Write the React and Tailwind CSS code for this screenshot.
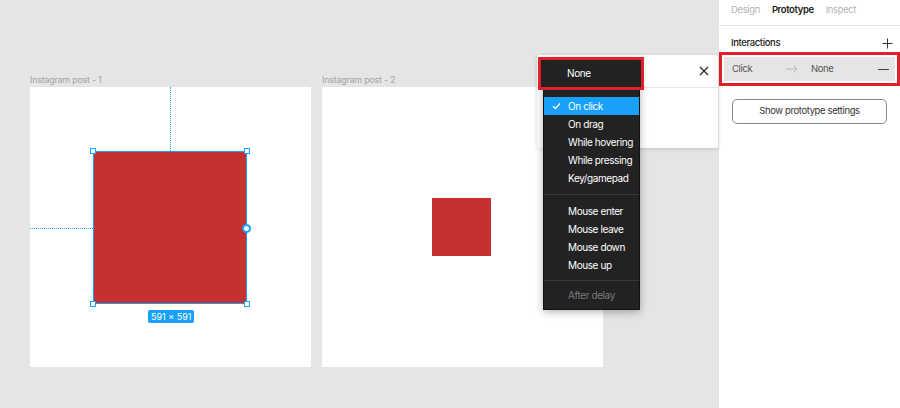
import React from "react";

const font = { fontFamily: "Inter, 'Noto Sans', sans-serif" };

function Handle({ className }) {
  return <div className={"absolute w-[6px] h-[6px] bg-white border border-[#18a0fb] " + className} />;
}

function Item({ children, checked, muted }) {
  return (
    <div
      className={
        "relative h-[18px] flex items-center pl-[24px] text-[10px] tracking-[-0.04em] whitespace-nowrap " +
        (checked ? "bg-[#18a0fb] text-white" : muted ? "text-[#7a7a7a]" : "text-white")
      }
    >
      {checked && (
        <svg className="absolute left-[8px] top-[5px]" width="9" height="8" viewBox="0 0 9 8">
          <path d="M1 4.2 L3.4 6.5 L8 1.5" stroke="white" strokeWidth="1.4" fill="none" />
        </svg>
      )}
      {children}
    </div>
  );
}

function Sep({ m }) {
  return <div className={"border-t border-[#3a3a3a] " + m} />;
}

export default function App() {
  return (
    <div className="flex w-[900px] h-[408px] overflow-hidden" style={font}>
      <div className="relative flex-1 bg-[#e5e5e5]">
        {/* Frame 1 */}
        <div className="absolute left-[30px] top-[74px] text-[9px] tracking-[-0.03em] text-[#a3a3a3] leading-[12px] whitespace-nowrap">Instagram post - 1</div>
        <div className="absolute left-[30px] top-[87px] w-[281px] h-[280px] bg-white">
          <div className="absolute left-[140px] top-0 h-[64px] border-l border-dotted border-[#18a0fb]" />
          <div className="absolute left-0 top-[141px] w-[63px] border-t border-dotted border-[#18a0fb]" />
          <div className="absolute left-[63px] top-[64px] w-[154px] h-[153px] bg-[#c53030] border border-[#18a0fb]">
            <Handle className="-left-[4px] -top-[4px]" />
            <Handle className="-right-[4px] -top-[4px]" />
            <Handle className="-left-[4px] -bottom-[4px]" />
            <Handle className="-right-[4px] -bottom-[4px]" />
            <div className="absolute -right-[5px] top-[72px] w-[9px] h-[9px] rounded-full bg-white border-2 border-[#18a0fb]" />
          </div>
          <div className="absolute left-[118px] top-[223px] h-[13px] px-[3px] rounded-[2px] bg-[#18a0fb] text-white text-[9px] leading-[13px] whitespace-nowrap">
            591 × 591
          </div>
        </div>

        {/* Frame 2 */}
        <div className="absolute left-[322px] top-[74px] text-[9px] tracking-[-0.03em] text-[#a3a3a3] leading-[12px] whitespace-nowrap">Instagram post - 2</div>
        <div className="absolute left-[322px] top-[87px] w-[281px] h-[280px] bg-white">
          <div className="absolute left-[110px] top-[111px] w-[59px] h-[58px] bg-[#c53030]" />
        </div>

        {/* Popover */}
        <div className="absolute left-[537px] top-[55px] w-[181px] h-[93px] bg-white rounded-[2px] shadow-[0_1px_4px_rgba(0,0,0,0.15)]">
          <div className="h-[33px] border-b border-[#e5e5e5] flex items-center justify-end pr-[9px]">
            <svg width="10" height="10" viewBox="0 0 10 10">
              <path d="M1 1 L9 9 M9 1 L1 9" stroke="#222" strokeWidth="1.2" />
            </svg>
          </div>
        </div>

        {/* Dropdown */}
        <div className="absolute left-[543px] top-[58px] w-[97px] h-[252px] bg-[#222222] border border-[#111] shadow-[0_2px_8px_rgba(0,0,0,0.3)] pt-[38px]">
          <Item checked>On click</Item>
          <Item>On drag</Item>
          <Item>While hovering</Item>
          <Item>While pressing</Item>
          <Item>Key/gamepad</Item>
          <Sep m="my-[7px]" />
          <Item>Mouse enter</Item>
          <Item>Mouse leave</Item>
          <Item>Mouse down</Item>
          <Item>Mouse up</Item>
          <Sep m="mt-[6px] mb-[5px]" />
          <Item muted>After delay</Item>
        </div>

        {/* None selected item with red highlight */}
        <div className="absolute left-[538px] top-[57px] w-[106px] h-[33px] border-[3px] border-[#e0212b] bg-[#222222]">
          <div className="h-full flex items-center pl-[26px] text-[10px] tracking-[-0.04em] text-white">None</div>
        </div>
      </div>

      {/* Right panel */}
      <div className="w-[182px] h-full bg-white border-l border-[#e5e5e5] flex flex-col text-[9.5px] tracking-[-0.04em]">
        <div className="h-[26px] border-b border-[#e5e5e5] flex items-center gap-[12px] px-[12px] pb-[5px]">
          <span className="text-[#b3b3b3]">Design</span>
          <span className="text-[#222] font-semibold">Prototype</span>
          <span className="text-[#b3b3b3]">Inspect</span>
        </div>
        <div className="h-[18px] mt-[8px] flex items-center justify-between pl-[12px] pr-[7px] text-[#222] font-medium">
          <span>Interactions</span>
          <svg width="11" height="11" viewBox="0 0 11 11">
            <path d="M5.5 0.5 V10.5 M0.5 5.5 H10.5" stroke="#333" strokeWidth="1" />
          </svg>
        </div>
        <div className="h-[34px] border-[3px] border-[#e0212b] p-[2px]">
          <div className="h-full bg-[#e5e5e5] flex items-center pl-[8px] pr-[6px] text-[#555]">
            <span className="w-[54px]">Click</span>
            <svg width="12" height="8" viewBox="0 0 12 8" className="mr-[13px]">
              <path d="M0 4 H11 M7.5 0.7 L11 4 L7.5 7.3" stroke="#b5b5b5" strokeWidth="1" fill="none" />
            </svg>
            <span className="flex-1">None</span>
            <div className="w-[11px] border-t border-[#444]" />
          </div>
        </div>
        <div className="px-[13px] mt-[13px]">
          <div className="h-[25px] border border-[#8a8a8a] rounded-[5px] flex items-center justify-center text-[#333]">
            Show prototype settings
          </div>
        </div>
      </div>
    </div>
  );
}
